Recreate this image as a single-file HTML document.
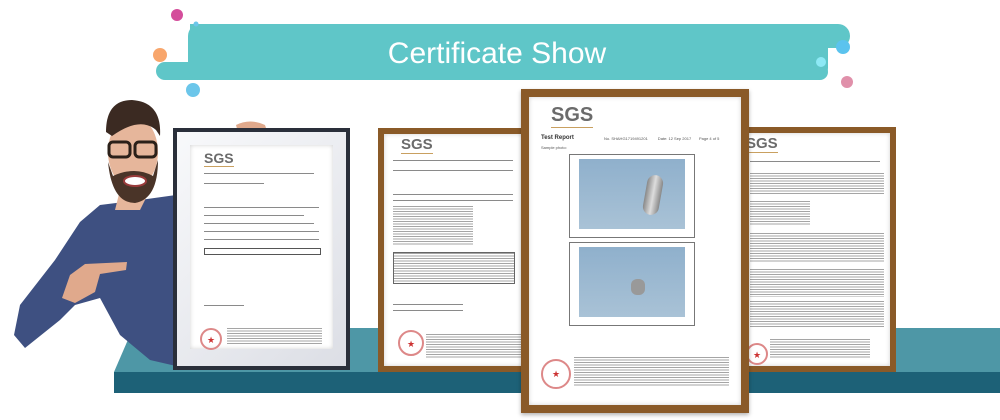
<!DOCTYPE html>
<html><head><meta charset="utf-8"><style>
body{margin:0;width:1000px;height:420px;overflow:hidden;background:#fff;font-family:"Liberation Sans",sans-serif;position:relative}
.a{position:absolute}
.doc{position:absolute;background:#fff;box-shadow:inset 0 0 5px rgba(0,0,0,.18)}
.sgs{position:absolute;font-weight:bold;color:#6b6b6b;font-family:"Liberation Sans",sans-serif;border-bottom:1px solid #c9a060}
.ln{position:absolute;height:2px;background:#8a8a8a}
.stamp{position:absolute;border:2px solid #d88;border-radius:50%}
.stamp:after{content:"★";position:absolute;left:0;right:0;top:30%;text-align:center;color:#c33;font-size:9px}
.fine{position:absolute;background:repeating-linear-gradient(#a5a5a5 0 1px,#fff 1px 2.5px)}
</style></head><body>
<svg class="a" style="left:0;top:0" width="1000" height="110">
<path d="M190,24 H838 a12,12 0 0 1 0,24 H822 a8,8 0 0 0 0,16 H820 a8,8 0 0 1 0,16 H165 a9,9 0 0 1 0,-18 H210 a9,9 0 0 0 0,-18 H200 a10,10 0 0 1 -10,-10 Z" fill="#5fc6c8"/>
<rect x="188" y="24" width="640" height="56" rx="12" fill="#5fc6c8"/>
<circle cx="177" cy="15" r="6" fill="#d44d9b"/><circle cx="196" cy="24" r="2.5" fill="#6cc6ea"/>
<circle cx="160" cy="55" r="7" fill="#f8a66c"/><circle cx="193" cy="90" r="7" fill="#6cc6ea"/>
<circle cx="843" cy="47" r="7" fill="#5bc3ee"/><circle cx="821" cy="62" r="5" fill="#8ee9f5"/><circle cx="847" cy="82" r="6" fill="#e090aa"/>
<text x="497" y="63" text-anchor="middle" fill="#fff" font-family="Liberation Sans" font-size="30">Certificate Show</text>
</svg>
<svg class="a" style="left:0;top:0" width="1000" height="420">
<polygon points="133,328 1000,328 1000,372 114,372" fill="#4e97a6"/>
<rect x="114" y="372" width="886" height="21" fill="#1d6177"/>
<path d="M100,205 L140,200 L176,195 L176,366 L150,360 L120,335 L100,298 L75,305 L60,320 L25,348 L14,335 L20,305 L55,260 L80,222 Z" fill="#3e5081"/>
<path d="M70,275 L85,264 L127,262 L126,270 L100,274 L95,292 L75,303 L62,298 Z" fill="#e0a98c"/>
<path d="M120,190 L150,190 L140,210 L115,210 Z" fill="#e6b69b"/>
<ellipse cx="133" cy="152" rx="25" ry="36" fill="#e6b69b"/>
<path d="M108,162 Q112,203 135,203 Q158,199 158,160 L153,176 Q135,166 113,176 Z" fill="#4a3428"/>
<path d="M106,132 Q106,100 132,100 Q162,102 160,136 L156,130 Q140,116 112,136 Z" fill="#3b2a22"/>
<rect x="109" y="142" width="21" height="15" rx="4" fill="none" stroke="#2b2019" stroke-width="3"/>
<rect x="135" y="142" width="21" height="15" rx="4" fill="none" stroke="#2b2019" stroke-width="3"/>
<ellipse cx="135" cy="181" rx="11" ry="5" fill="#fff" stroke="#9a3b3b" stroke-width="2"/>
<path d="M236,125 Q250,118 265,125 L270,140 L240,140 Z" fill="#e0a98c"/>
</svg>
<div class="a" style="left:173px;top:128px;width:177px;height:242px;background:#2a2f3a"></div>
<div class="a" style="left:177px;top:132px;width:169px;height:234px;background:linear-gradient(135deg,#f8f9fb,#dcdee5)"></div>
<div class="doc" style="left:190px;top:145px;width:143px;height:204px">
<div class="sgs" style="left:14px;top:5px;font-size:14px">SGS</div>
<div class="ln" style="left:14px;top:28px;width:110px;height:1px"></div>
<div class="ln" style="left:14px;top:38px;width:60px;height:1px"></div>
<div class="ln" style="left:14px;top:62px;width:115px;height:1px"></div>
<div class="ln" style="left:14px;top:70px;width:100px;height:1px"></div>
<div class="ln" style="left:14px;top:78px;width:110px;height:1px"></div>
<div class="ln" style="left:14px;top:86px;width:115px;height:1px"></div>
<div class="ln" style="left:14px;top:94px;width:115px;height:1px"></div>
<div class="a" style="left:14px;top:103px;width:115px;height:5px;border:1px solid #555"></div>
<div class="ln" style="left:14px;top:160px;width:40px;height:1px"></div>
<div class="stamp" style="left:10px;top:183px;width:18px;height:18px"></div>
<div class="fine" style="left:37px;top:183px;width:95px;height:16px"></div>
</div>
<div class="a" style="left:378px;top:128px;width:150px;height:244px;background:#8a5a28"></div>
<div class="doc" style="left:384px;top:134px;width:140px;height:232px">
<div class="sgs" style="left:17px;top:2px;font-size:15px">SGS</div>
<div class="ln" style="left:9px;top:26px;width:120px;height:1px"></div>
<div class="ln" style="left:9px;top:36px;width:120px;height:1px"></div>
<div class="ln" style="left:9px;top:60px;width:120px;height:1px"></div>
<div class="ln" style="left:9px;top:66px;width:120px;height:1px"></div>
<div class="fine" style="left:9px;top:72px;width:80px;height:40px"></div>
<div class="fine" style="left:9px;top:118px;width:120px;height:30px;border:1px solid #666"></div>
<div class="ln" style="left:9px;top:170px;width:70px;height:1px"></div>
<div class="ln" style="left:9px;top:176px;width:70px;height:1px"></div>
<div class="stamp" style="left:14px;top:196px;width:22px;height:22px"></div>
<div class="fine" style="left:42px;top:200px;width:95px;height:24px"></div>
</div>
<div class="a" style="left:740px;top:127px;width:156px;height:245px;background:#8a5a28"></div>
<div class="doc" style="left:746px;top:133px;width:144px;height:233px">
<div class="sgs" style="left:0px;top:2px;font-size:15px">SGS</div>
<div class="ln" style="left:4px;top:28px;width:130px;height:1px"></div>
<div class="fine" style="left:4px;top:40px;width:134px;height:22px"></div>
<div class="fine" style="left:4px;top:68px;width:60px;height:24px"></div>
<div class="fine" style="left:4px;top:100px;width:134px;height:30px"></div>
<div class="fine" style="left:4px;top:136px;width:134px;height:28px"></div>
<div class="fine" style="left:4px;top:168px;width:134px;height:26px"></div>
<div class="stamp" style="left:0px;top:210px;width:18px;height:18px"></div>
<div class="fine" style="left:24px;top:206px;width:100px;height:20px"></div>
</div>
<div class="a" style="left:521px;top:89px;width:228px;height:324px;background:#8a5a28;box-shadow:0 2px 4px rgba(0,0,0,.3)"></div>
<div class="doc" style="left:529px;top:97px;width:212px;height:308px">
<div class="sgs" style="left:22px;top:7px;font-size:20px">SGS</div>
<div class="a" style="left:12px;top:38px;font-size:6px;font-weight:bold;color:#333">Test Report</div>
<div class="a" style="left:75px;top:39px;font-size:4px;color:#555;white-space:nowrap">No. SHAHG1719491201 &nbsp; &nbsp; &nbsp; &nbsp; Date: 12 Sep 2017 &nbsp; &nbsp; &nbsp; Page 4 of 5</div>
<div class="a" style="left:12px;top:48px;font-size:4px;color:#555">Sample photo:</div>
<div class="a" style="left:40px;top:57px;width:124px;height:82px;border:1px solid #777;background:#fff">
<div class="a" style="left:9px;top:4px;width:106px;height:70px;background:linear-gradient(#8fb0cc,#a9c2d6)"></div>
<div class="a" style="left:75px;top:20px;width:16px;height:40px;background:linear-gradient(90deg,#888,#ddd,#888);border-radius:8px;transform:rotate(10deg)"></div>
</div>
<div class="a" style="left:40px;top:145px;width:124px;height:82px;border:1px solid #777;background:#fff">
<div class="a" style="left:9px;top:4px;width:106px;height:70px;background:linear-gradient(#8fb0cc,#a9c2d6)"></div>
<div class="a" style="left:61px;top:36px;width:14px;height:16px;background:#999;border-radius:6px"></div>
</div>
<div class="stamp" style="left:12px;top:262px;width:26px;height:26px"></div>
<div class="fine" style="left:45px;top:260px;width:155px;height:30px"></div>
</div>
</body></html>
